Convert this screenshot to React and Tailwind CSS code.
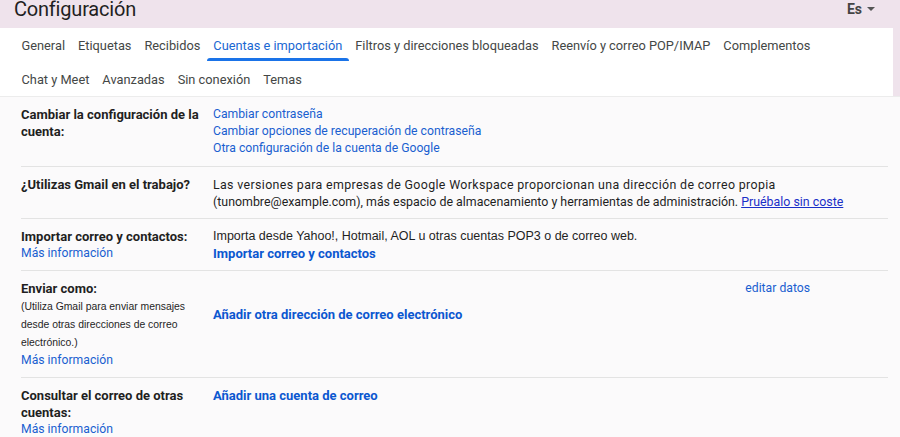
import React from 'react';

const tabsRow1 = ['General', 'Etiquetas', 'Recibidos', 'Cuentas e importación', 'Filtros y direcciones bloqueadas', 'Reenvío y correo POP/IMAP', 'Complementos'];
const tabsRow2 = ['Chat y Meet', 'Avanzadas', 'Sin conexión', 'Temas'];

function Tab({ label }) {
  const active = label === 'Cuentas e importación';
  return (
    <div className={`relative px-[6.5px] h-[34px] flex items-center ${active ? 'text-[#1a67d2]' : 'text-[#444746]'}`}>
      {label}
      {active && <div className="absolute left-0 right-0 bottom-[1px] h-[3px] bg-[#1a73e8] rounded-t-sm" />}
    </div>
  );
}

function Row({ label, children, border = true }) {
  return (
    <div className={`flex ml-[21px] mr-[12px] ${border ? 'border-b border-[#e3e3e3]' : ''}`}>
      <div className="w-[192px] shrink-0">{label}</div>
      <div className="flex-1">{children}</div>
    </div>
  );
}

const link = 'text-[#1a5fd0] text-[12.2px]';
const boldLink = 'text-[#0b57d0] font-bold';
const desc = 'text-[#1f1f1f] text-[12.5px]';
const arial = { fontFamily: '"Liberation Sans", Arial, sans-serif' };

export default function App() {
  return (
    <div className="w-[900px] h-[437px] overflow-hidden bg-[#efe3ec] text-[13px] leading-[17px] text-[#1f1f1f]" style={{ fontFamily: 'Roboto, "Liberation Sans", sans-serif' }}>
      <div className="h-[28px] flex justify-between overflow-hidden">
        <div className="ml-[14px] mt-[1px] text-[20px] leading-[16px] tracking-[-0.2px] text-[#1f1f1f]">Configuración</div>
        <div className="mr-[25px] mt-[1px] flex items-center gap-[5px] h-[16px] font-bold text-[#444] text-[14px]">
          Es
          <svg width="8" height="5" viewBox="0 0 8 5"><path d="M0 0h8L4 4z" fill="#555" /></svg>
        </div>
      </div>
      <div className="bg-white mr-[7px] h-[68px] pl-[15px] text-[12.8px]">
        <div className="flex">
          {tabsRow1.map((t) => <Tab key={t} label={t} />)}
        </div>
        <div className="flex">
          {tabsRow2.map((t) => <Tab key={t} label={t} />)}
        </div>
      </div>
      <div className="bg-[#fbfafb] h-full pt-[9px] border-t border-[#ececec]">
        <Row label={<div className="font-bold pb-[9px]">Cambiar la configuración de la<br />cuenta:</div>}>
          <div className="flex flex-col pb-[9px]">
            <span className={link}>Cambiar contraseña</span>
            <span className={link}>Cambiar opciones de recuperación de contraseña</span>
            <span className={link}>Otra configuración de la cuenta de Google</span>
          </div>
        </Row>
        <Row label={<div className="font-bold pt-[9px]">¿Utilizas Gmail en el trabajo?</div>}>
          <div className="pt-[9px] pb-[8px] text-[#1f1f1f] text-[12.4px] leading-[17px]">
            <span className="tracking-[0.35px]">Las versiones para empresas de Google Workspace proporcionan una dirección de correo propia</span><br />
            (tunombre@example.com), más espacio de almacenamiento y herramientas de administración.{' '}
            <span className="text-[#1a2fc8] underline">Pruébalo sin coste</span>
          </div>
        </Row>
        <Row label={<div className="pt-[9px] pb-[8px]"><div className="font-bold">Importar correo y contactos:</div><div className={link}>Más información</div></div>}>
          <div className="pt-[9px] pb-[8px]">
            <div className={desc} style={arial}>Importa desde Yahoo!, Hotmail, AOL u otras cuentas POP3 o de correo web.</div>
            <div className={boldLink}>Importar correo y contactos</div>
          </div>
        </Row>
        <Row label={
          <div className="pt-[9px] pb-[8px]">
            <div className="font-bold">Enviar como:</div>
            <div className="text-[10.4px] leading-[18px] mt-[1px]" style={arial}>(Utiliza Gmail para enviar mensajes<br />desde otras direcciones de correo<br />electrónico.)</div>
            <div className={link}>Más información</div>
          </div>
        }>
          <div className="flex pt-[9px]">
            <div className={`${boldLink} mt-[26px] flex-1`}>Añadir otra dirección de correo electrónico</div>
            <div className={`${link} mr-[78px]`}>editar datos</div>
          </div>
        </Row>
        <Row border={false} label={
          <div className="pt-[9px]">
            <div className="font-bold">Consultar el correo de otras<br />cuentas:</div>
            <div className={link}>Más información</div>
          </div>
        }>
          <div className={`${boldLink} pt-[9px]`}>Añadir una cuenta de correo</div>
        </Row>
      </div>
    </div>
  );
}
